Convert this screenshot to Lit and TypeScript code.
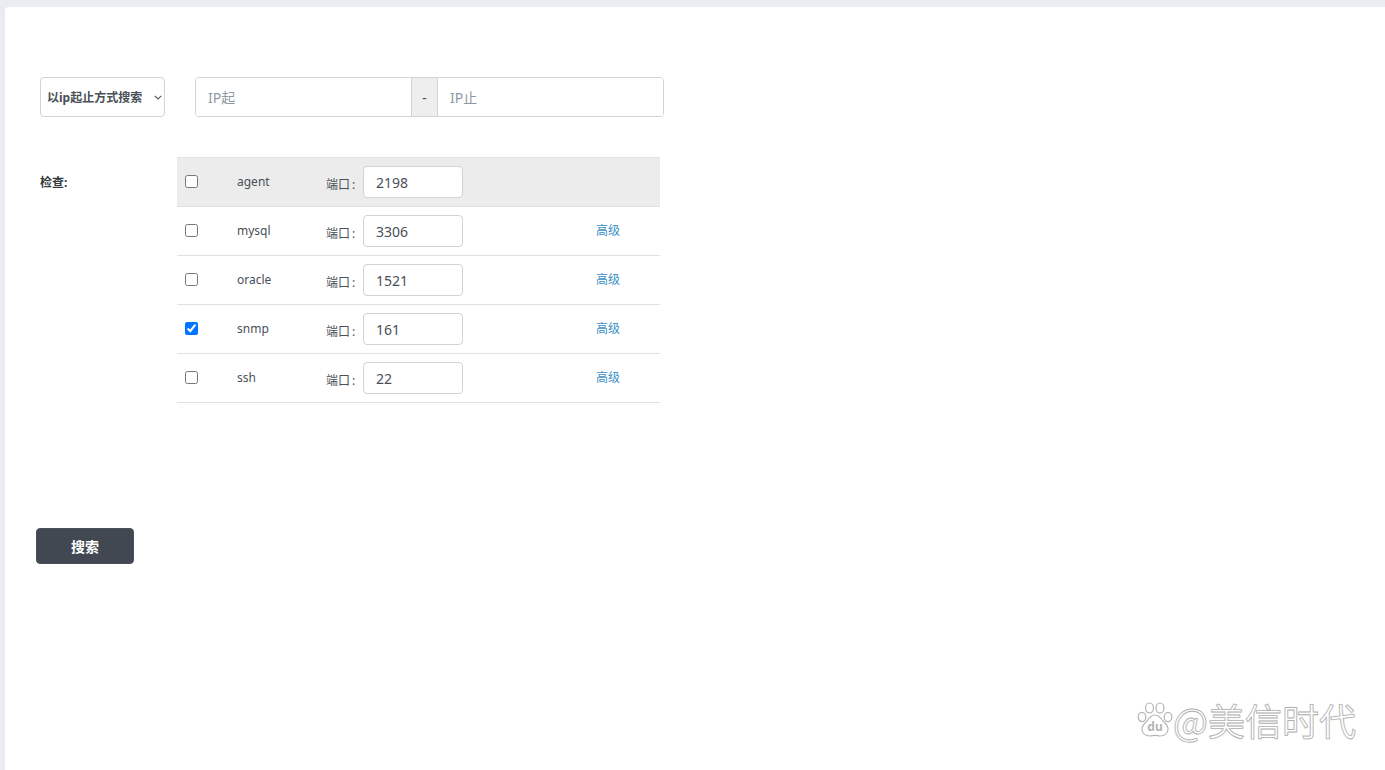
import { LitElement, html, css, nothing } from "lit";
import { customElement } from "lit/decorators.js";

const rows = [
  { name: "agent", port: "2198", checked: false, adv: false, head: true },
  { name: "mysql", port: "3306", checked: false, adv: true, head: false },
  { name: "oracle", port: "1521", checked: false, adv: true, head: false },
  { name: "snmp", port: "161", checked: true, adv: true, head: false },
  { name: "ssh", port: "22", checked: false, adv: true, head: false },
];

@customElement("app-root")
export class AppRoot extends LitElement {
  static styles = css`
    :host {
      display: block;
      height: 770px;
      overflow: hidden;
      background: #ebecf2;
      padding: 7px 0 0 5px;
      box-sizing: border-box;
      font-family: "Noto Sans", "Noto Sans CJK SC", sans-serif;
      color: #495057;
      font-size: 12px;
    }
    .card {
      position: relative;
      height: 763px;
      background: #fff;
      border-top-left-radius: 4px;
      padding: 70px 0 0 35px;
      box-sizing: border-box;
    }
    .top {
      display: flex;
      gap: 30px;
      height: 40px;
    }
    .sel {
      position: relative;
      width: 125px;
      height: 40px;
    }
    .sel svg {
      position: absolute;
      right: 3px;
      top: 18px;
      pointer-events: none;
    }
    select {
      appearance: none;
      width: 125px;
      height: 40px;
      border: 1px solid #ced4da;
      border-radius: 4px;
      background: #fff;
      color: #495057;
      font: 700 12px "Noto Sans", "Noto Sans CJK SC", sans-serif;
      padding: 0 0 0 6px;
      box-sizing: border-box;
    }
    .group {
      display: flex;
      width: 469px;
      height: 40px;
      box-sizing: border-box;
      border: 1px solid #ced4da;
      border-radius: 4px;
      overflow: hidden;
    }
    .group input {
      flex: 1;
      min-width: 0;
      border: 0;
      outline: 0;
      padding: 0 12px;
      box-sizing: border-box;
      font: 14px "Noto Sans", "Noto Sans CJK SC", sans-serif;
      color: #495057;
      background: #fff;
    }
    .group input.first {
      flex: none;
      width: 215px;
    }
    .group input::placeholder {
      color: #8f99a3;
      opacity: 1;
    }
    .dash {
      width: 27px;
      flex: none;
      box-sizing: border-box;
      display: flex;
      align-items: center;
      justify-content: center;
      background: #eeeeee;
      border-left: 1px solid #ced4da;
      border-right: 1px solid #ced4da;
      font-size: 14px;
    }
    .check {
      display: flex;
      margin-top: 40px;
    }
    .label {
      width: 137px;
      flex: none;
      font-weight: 700;
      color: #343a40;
      line-height: 51px;
      height: 49px;
    }
    .table {
      width: 483px;
    }
    .row {
      height: 49px;
      box-sizing: border-box;
      display: grid;
      grid-template-columns: 60px 89px 1fr 64px;
      align-items: center;
      border-bottom: 1px solid #dee2e6;
      color: #495057;
    }
    .row.head {
      height: 50px;
      background: #ececec;
      border-top: 1px solid #e2e2e2;
    }
    .row input[type="checkbox"] {
      width: 13px;
      height: 13px;
      margin: 0 0 2px 8px;
      accent-color: #0075ff;
    }
    .name,
    .adv {
      margin-bottom: 2px;
    }
    .port {
      display: flex;
      align-items: center;
    }
    .port span {
      width: 37px;
      flex: none;
      padding-top: 3px;
    }
    .port span b {
      font-weight: 400;
      margin-left: 2px;
    }
    .port input {
      width: 100px;
      height: 32px;
      box-sizing: border-box;
      border: 1px solid #ced4da;
      border-radius: 4px;
      background: #fff;
      padding: 0 12px;
      outline: 0;
      font: 14px "Noto Sans", "Noto Sans CJK SC", sans-serif;
      color: #495057;
    }
    .adv {
      color: #3b8fc4;
    }
    .search {
      display: block;
      margin: 125px 0 0 -4px;
      width: 98px;
      height: 36px;
      background: #414852;
      border: 1px solid #4b515b;
      border-radius: 4px;
      box-sizing: border-box;
      color: #fff;
      font: 700 14px "Noto Sans", "Noto Sans CJK SC", sans-serif;
    }
    .mark {
      position: absolute;
      left: 1132px;
      top: 690px;
      display: flex;
      align-items: center;
      gap: 0;
      height: 46px;
    }
    .mark span {
      font: 37px "Noto Sans CJK SC", sans-serif;
      color: #fff;
      -webkit-text-stroke: 0.8px #b0b0b0;
      text-shadow: 0 0 2px rgba(0, 0, 0, 0.12);
      line-height: 46px;
    }
  `;

  render() {
    return html`
      <div class="card">
        <div class="top">
          <div class="sel">
            <select><option>以ip起止方式搜索</option></select>
            <svg width="8" height="5" viewBox="0 0 8 5"><path d="M.7.8 4 4 7.3.8" fill="none" stroke="#555" stroke-width="1.1" /></svg>
          </div>
          <div class="group">
            <input class="first" placeholder="IP起" />
            <div class="dash">-</div>
            <input placeholder="IP止" />
          </div>
        </div>
        <div class="check">
          <div class="label">检查:</div>
          <div class="table">
            ${rows.map(
              (r) => html`
                <div class="row ${r.head ? "head" : ""}">
                  <input type="checkbox" .checked=${r.checked} />
                  <div class="name">${r.name}</div>
                  <div class="port">
                    <span>端口<b>:</b></span>
                    <input .value=${r.port} />
                  </div>
                  <div class="adv">${r.adv ? "高级" : nothing}</div>
                </div>
              `
            )}
          </div>
        </div>
        <button class="search">搜索</button>
        <div class="mark">
          <svg width="36" height="38" viewBox="0 0 36 38" fill="#fff" stroke="#b4b4b4" stroke-width="1.2">
            <ellipse cx="5" cy="16" rx="3.8" ry="4.6" />
            <ellipse cx="12.5" cy="7" rx="4" ry="5" />
            <ellipse cx="23" cy="7" rx="4" ry="5" />
            <ellipse cx="31" cy="16" rx="3.8" ry="4.6" />
            <path d="M18 14c-4 0-6 3-8 6-2 2-5 4-5 8 0 5 4 7 8 7 2 0 3-.6 5-.6s3 .6 5 .6c4 0 8-2 8-7 0-4-3-6-5-8-2-3-4-6-8-6z" />
            <text x="18" y="30" text-anchor="middle" font-family="Noto Sans" font-size="12" font-weight="700" fill="#b4b4b4" stroke="none">du</text>
          </svg>
          <span>@美信时代</span>
        </div>
      </div>
    `;
  }
}
